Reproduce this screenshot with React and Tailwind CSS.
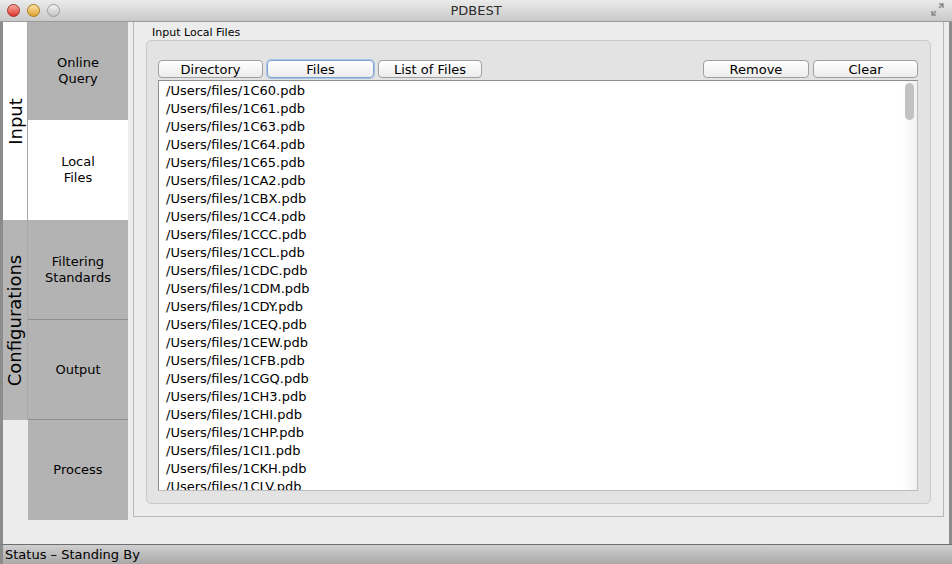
import React from "react";

const files = ["1C60","1C61","1C63","1C64","1C65","1CA2","1CBX","1CC4","1CCC","1CCL","1CDC","1CDM","1CDY","1CEQ","1CEW","1CFB","1CGQ","1CH3","1CHI","1CHP","1CI1","1CKH","1CLV"];

function Btn({ children, w, focus }) {
  return (
    <div
      className={`h-[18px] flex items-center justify-center rounded-[4px] border text-[13px] leading-none text-black bg-gradient-to-b from-white to-[#ececec] ${focus ? "border-[#7fa3cf] shadow-[0_0_0_1px_#a9c4e6]" : "border-[#a0a0a0]"}`}
      style={{ width: w }}
    >
      {children}
    </div>
  );
}

function Light({ from, to, border }) {
  return (
    <div className={`w-[13px] h-[13px] rounded-full border ${border} bg-gradient-to-b ${from} ${to}`} />
  );
}

export default function App() {
  return (
    <div className="w-[952px] h-[564px] flex flex-col overflow-hidden bg-[#ececec] text-black" style={{ fontFamily: '"DejaVu Sans", "Noto Sans", sans-serif' }}>
      {/* Title bar */}
      <div className="relative h-[22px] shrink-0 flex items-center border-b border-[#9a9a9a] bg-gradient-to-b from-[#ebebeb] to-[#c9c9c9]">
        <div className="flex items-center gap-[7px] pl-[7px]">
          <Light from="from-[#f7a6a0]" to="to-[#d9302a]" border="border-[#a1312b]" />
          <Light from="from-[#fbe3a3]" to="to-[#e0a324]" border="border-[#a77a1d]" />
          <Light from="from-[#f2f2f2]" to="to-[#c4c4c4]" border="border-[#9c9c9c]" />
        </div>
        <div className="absolute inset-0 flex items-center justify-center text-[13px] text-[#2b2b2b]">PDBEST</div>
        <svg className="absolute right-[8px] top-[3px]" width="13" height="13" viewBox="0 0 13 13">
          <path d="M8 1h4v4M12 1L8 5M5 12H1V8M1 12l4-4" stroke="#8a8a8a" strokeWidth="1.5" fill="none" />
        </svg>
      </div>

      {/* Body */}
      <div className="flex-1 flex min-h-0 border-l-[3px] border-r-[3px] border-[#8c8c8c]">
        {/* Outer vertical tabs */}
        <div className="w-[25px] shrink-0 flex flex-col">
          <div className="h-[198px] bg-white flex items-center justify-center border-r border-[#a8a8a8]">
            <span className="-rotate-90 whitespace-nowrap text-[18px]">Input</span>
          </div>
          <div className="h-[200px] bg-[#b5b5b5] flex items-center justify-center border-r border-[#a8a8a8]">
            <span className="-rotate-90 whitespace-nowrap text-[18px]">Configurations</span>
          </div>
        </div>
        {/* Inner tabs */}
        <div className="w-[100px] shrink-0 flex flex-col text-[13px] leading-[16px] text-center">
          <div className="h-[98px] bg-[#b3b3b3] flex items-center justify-center">Online<br />Query</div>
          <div className="h-[100px] bg-white flex items-center justify-center">Local<br />Files</div>
          <div className="h-[100px] bg-[#b3b3b3] flex items-center justify-center border-b border-[#8f8f8f]">Filtering<br />Standards</div>
          <div className="h-[100px] bg-[#b3b3b3] flex items-center justify-center border-b border-[#8f8f8f]">Output</div>
          <div className="h-[100px] bg-[#b3b3b3] flex items-center justify-center">Process</div>
        </div>

        {/* Content */}
        <div className="flex-1 min-h-0 pl-[5px] pr-[5px] pb-[27px] flex">
          <div className="flex-1 min-h-0 border border-[#b8b8b8] border-t-0 bg-[#ececec] px-[12px] pt-[3px] pb-[12px] flex flex-col">
            <div className="text-[11px] leading-[14px] pl-[6px] pt-[1px]">Input Local Files</div>
            <div className="flex-1 min-h-0 rounded-[5px] border border-[#cacaca] bg-[#e3e3e3] pl-[11px] pr-[12px] pt-[19px] pb-[12px] flex flex-col">
              <div className="flex items-center h-[18px] shrink-0">
                <div className="flex gap-[4px]">
                  <Btn w={105}>Directory</Btn>
                  <Btn w={107} focus>Files</Btn>
                  <Btn w={104}>List of Files</Btn>
                </div>
                <div className="ml-auto flex gap-[4px]">
                  <Btn w={106}>Remove</Btn>
                  <Btn w={105}>Clear</Btn>
                </div>
              </div>
              <div className="relative mt-[2px] flex-1 min-h-0 bg-white border border-[#8e8e8e] border-r-[#bdbdbd] border-b-[#bdbdbd] overflow-hidden">
                <div className="pl-[7px] pt-[1px] text-[13px] leading-[18px]">
                  {files.map((f) => (
                    <div key={f}>/Users/files/{f}.pdb</div>
                  ))}
                </div>
                <div className="absolute right-0 top-0 bottom-0 w-[15px] bg-gradient-to-r from-white to-[#f1f1f1]">
                  <div className="absolute right-[3px] top-[2px] w-[9px] h-[37px] rounded-full bg-[#c2c2c2]" />
                </div>
              </div>
            </div>
          </div>
        </div>
      </div>

      {/* Status bar */}
      <div className="h-[20px] shrink-0 border-t border-[#6f6f6f] bg-gradient-to-b from-[#cfcfcf] to-[#a9a9a9] border-l-[3px] border-l-[#8c8c8c] flex items-center pl-[2px] text-[13px]">
        Status – Standing By
      </div>
    </div>
  );
}
